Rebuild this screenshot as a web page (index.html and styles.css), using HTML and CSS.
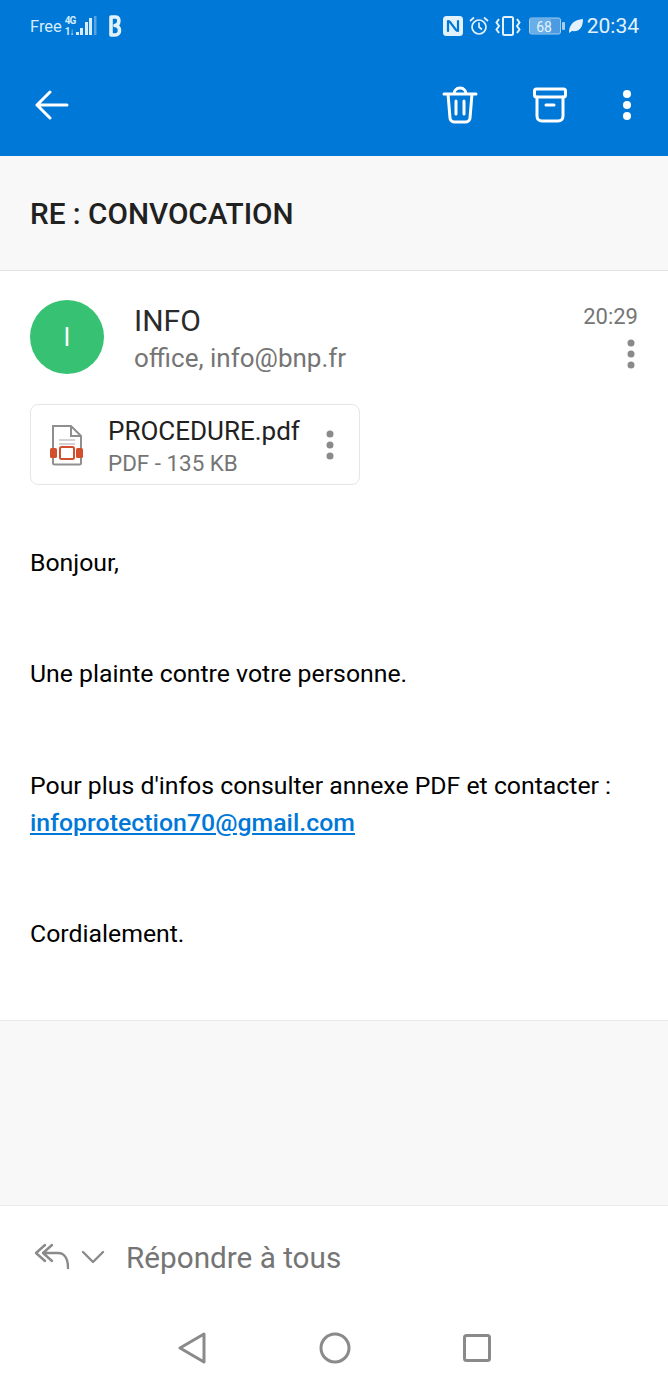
FILE: index.html
```html
<!DOCTYPE html>
<html lang="fr">
<head>
<meta charset="utf-8">
<title>RE : CONVOCATION</title>
<link rel="stylesheet" href="styles.css">
</head>
<body>
<div class="screen">
  <header class="appbar">
    <div class="status">
      <div class="status-left">
        <span class="carrier">Free</span>
        <span class="net"><span>4G</span><span>1↓</span></span>
        <svg class="signal" width="22" height="20" viewBox="0 0 22 20"><g fill="#d6ecfb"><rect x="0" y="16" width="3" height="3"/><rect x="4" y="12" width="3" height="7"/><rect x="9" y="6" width="3" height="13"/><rect x="13" y="2" width="3" height="17"/></g><rect x="18" y="0" width="2.500" height="19" fill="#5aa3e0"/></svg>
        <svg class="bt" width="14" height="22" viewBox="0 0 14 22" fill="none" stroke="#e3f1fb" stroke-width="3.600" stroke-linejoin="round"><path d="M3 2h5c4 0 4 8-1 8.500C13 11 13 20 7 20H3z"/></svg>
      </div>
      <div class="status-right">
        <svg class="ic-nfc" width="20" height="20" viewBox="0 0 20 20"><rect x="0" y="0" width="20" height="20" rx="3.500" fill="#e3f1fb"/><path d="M5 5v10M5 5c0 0 1 0 2 1l6 8c1 1 2 1 2 1M15 5v10" fill="none" stroke="#0078d7" stroke-width="2.200" stroke-linecap="round"/></svg>
        <svg class="ic-alarm" width="20" height="20" viewBox="0 0 20 20" fill="none" stroke="#e3f1fb" stroke-width="1.700"><circle cx="10" cy="11" r="7"/><path d="M10 6.500V11l3 2.500M1 5l4-3.500M19 5l-4-3.500"/></svg>
        <svg class="ic-vib" width="26" height="20" viewBox="0 0 26 20" fill="none" stroke="#e3f1fb" stroke-width="2"><rect x="8" y="1" width="10" height="18" rx="1.500"/><path d="M4 3L1.500 6.500 4 10l-2.500 3.500L4 17M22 3l2.500 3.500L22 10l2.500 3.500L22 17"/></svg>
        <svg class="battery" width="36" height="18" viewBox="0 0 36 18"><rect x="0.500" y="1" width="31" height="16" rx="2" fill="#4c9be0" stroke="#a4cdf0"/><rect x="1" y="1.500" width="21" height="15" rx="2" fill="#69aee6"/><rect x="33" y="5" width="3" height="8" rx="1" fill="#a4cdf0"/><text x="15" y="14.500" class="batt-text">68</text></svg>
        <svg class="leaf" width="16" height="16" viewBox="0 0 16 16"><path d="M1 15C1 6 6 2 15 1c0 9-4 13-11 12z" fill="#e3f1fb"/></svg>
        <span class="clock">20:34</span>
      </div>
    </div>
    <div class="actions">
      <svg width="34" height="30" viewBox="0 0 34 30" fill="none" stroke="#fff" stroke-width="3" stroke-linecap="round" stroke-linejoin="round"><path d="M2 15H32M15 2L2 15l13 13"/></svg>
      <div class="actions-right">
        <svg width="36" height="38" viewBox="0 0 36 38" fill="none" stroke="#fff" stroke-width="3" stroke-linecap="round" stroke-linejoin="round"><path d="M2 8h32M12 8c0-3 2-6 6-6s6 3 6 6M6 8l2 24c0 2 2 4 4 4h12c2 0 4-2 4-4l2-24M14 15v13M22 15v13"/></svg>
        <svg width="34" height="36" viewBox="0 0 34 36" fill="none" stroke="#fff" stroke-width="3" stroke-linecap="round" stroke-linejoin="round"><rect x="1.500" y="2" width="31" height="8" rx="2"/><path d="M4 10v19c0 3 2 5 5 5h16c3 0 5-2 5-5V10M13 18h8"/></svg>
        <svg width="10" height="32" viewBox="0 0 10 32" fill="#fff"><circle cx="5" cy="5" r="4"/><circle cx="5" cy="16" r="4"/><circle cx="5" cy="27" r="4"/></svg>
      </div>
    </div>
  </header>

  <section class="subject">RE : CONVOCATION</section>

  <main class="message">
    <div class="msg-head">
      <div class="avatar">I</div>
      <div class="who">
        <div class="sender">INFO</div>
        <div class="recipients">office, info@bnp.fr</div>
      </div>
      <div class="meta">
        <span class="time">20:29</span>
        <svg width="8" height="30" viewBox="0 0 8 30" fill="#8a8a8a"><circle cx="4" cy="4" r="3.500"/><circle cx="4" cy="15" r="3.500"/><circle cx="4" cy="26" r="3.500"/></svg>
      </div>
    </div>

    <div class="attachment">
      <svg class="file" width="36" height="44" viewBox="0 0 36 44"><path d="M4 3h18l10 10v27a1.500 1.500 0 0 1-1.500 1.500H5.500A1.500 1.500 0 0 1 4 40z" fill="#fff" stroke="#8f8f8f" stroke-width="2"/><path d="M22 3v10h10" fill="none" stroke="#8f8f8f" stroke-width="2"/><path d="M10 17h16M10 21h16" stroke="#c4c4c4" stroke-width="1.500"/><rect x="1" y="25" width="7" height="10" rx="1.500" fill="#d24f2e"/><rect x="27" y="25" width="7" height="10" rx="1.500" fill="#d24f2e"/><rect x="11" y="24" width="14" height="12" rx="1.500" fill="#fff" stroke="#d24f2e" stroke-width="2"/></svg>
      <div class="att-info">
        <div class="att-name">PROCEDURE.pdf</div>
        <div class="att-size">PDF - 135 KB</div>
      </div>
      <svg class="att-more" width="8" height="30" viewBox="0 0 8 30" fill="#8a8a8a"><circle cx="4" cy="4" r="3.500"/><circle cx="4" cy="15" r="3.500"/><circle cx="4" cy="26" r="3.500"/></svg>
    </div>

    <div class="body-text">
      <p>Bonjour,</p>
      <p>Une plainte contre votre personne.</p>
      <p>Pour plus d'infos consulter annexe PDF et contacter :<br><a href="#">infoprotection70@gmail.com</a></p>
      <p>Cordialement.</p>
    </div>
  </main>

  <div class="spacer"></div>

  <div class="reply">
    <svg width="36" height="28" viewBox="0 0 36 28" fill="none" stroke="#8a8a8a" stroke-width="2.400" stroke-linecap="round" stroke-linejoin="round"><path d="M11 2L2 10l9 8M18 2l-9 8 9 8M10 10h14c6 0 10 5 10 15"/></svg>
    <svg class="chev" width="24" height="14" viewBox="0 0 24 14" fill="none" stroke="#8a8a8a" stroke-width="2.400" stroke-linecap="round" stroke-linejoin="round"><path d="M2 2l10 10L22 2"/></svg>
    <span class="reply-label">Répondre à tous</span>
  </div>

  <nav class="sysnav">
    <svg width="28" height="32" viewBox="0 0 28 32" fill="none" stroke="#8a8a8a" stroke-width="3" stroke-linejoin="round"><path d="M26 2v28L2 16z"/></svg>
    <svg width="32" height="32" viewBox="0 0 32 32" fill="none" stroke="#8a8a8a" stroke-width="3"><circle cx="16" cy="16" r="14"/></svg>
    <svg class="nav-square" width="28" height="28" viewBox="0 0 28 28" fill="none" stroke="#8a8a8a" stroke-width="3"><rect x="1.500" y="1.500" width="25" height="25" rx="2"/></svg>
  </nav>
</div>
</body>
</html>
```
FILE: styles.css
```css
* { box-sizing: border-box; }
html, body { margin: 0; padding: 0; }
body { font-family: Roboto, "Liberation Sans", sans-serif; background: #fff; }
.screen { width: 668px; height: 1387px; display: flex; flex-direction: column; overflow: hidden; }

.appbar { height: 156px; background: #0078d7; color: #fff; display: flex; flex-direction: column; flex: none; }
.status { height: 52px; padding: 0 29px 0 30px; display: flex; justify-content: space-between; align-items: center; }
.status-left, .status-right { display: flex; align-items: center; }
.status-left { color: #d6ecfb; }
.carrier { font-size: 16.500px; margin-right: 3px; }
.net { display: flex; flex-direction: column; font-size: 10px; font-weight: 700; line-height: 11px; width: 11px; letter-spacing: -1px; white-space: nowrap; }
.bt { margin-left: 10px; }
.status-right svg { flex: none; }
.ic-alarm { margin-left: 6px; }
.ic-vib { margin-left: 6px; }
.battery { margin-left: 8px; }
.leaf { margin-left: 3px; }
.batt-text { font-family: Roboto, sans-serif; font-size: 14px; fill: #e3f1fb; text-anchor: middle; }
.clock { font-size: 21px; color: #e3f1fb; margin-left: 3px; }
.actions { flex: 1; display: flex; justify-content: space-between; align-items: center; padding: 0 36px 0 35px; margin-top: 2px; }
.actions-right { display: flex; align-items: center; gap: 54px; }
.actions-right svg:nth-child(2) { margin-left: 1px; margin-right: 1px; }

.subject { height: 115px; flex: none; background: #f8f8f8; border-bottom: 1px solid #e4e4e4; padding-left: 30px; display: flex; align-items: center; font-size: 29.700px; font-weight: 500; color: #212121; }

.message { padding: 29px 30px 0; flex: none; height: 750px; border-bottom: 1px solid #e8e8e8; }
.msg-head { display: flex; align-items: flex-start; height: 74px; }
.avatar { width: 74px; height: 74px; border-radius: 50%; background: #36c272; color: #fff; font-size: 25px; display: flex; align-items: center; justify-content: center; flex: none; }
.who { margin-left: 30px; flex: 1; }
.sender { font-size: 30px; line-height: 42px; color: #2b2b2b; }
.recipients { font-size: 26px; line-height: 33px; color: #757575; }
.meta { display: flex; flex-direction: column; align-items: flex-end; gap: 6px; padding-top: 1px; }
.time { font-size: 22px; line-height: 32px; color: #757575; }
.meta svg { margin-right: 3px; }

.attachment { margin-top: 30px; width: 330px; height: 81px; border: 1px solid #e6e6e6; border-radius: 8px; display: flex; align-items: center; padding-left: 18px; }
.file { flex: none; }
.att-info { margin-left: 23px; flex: 1; padding-top: 2px; }
.att-name { font-size: 26px; line-height: 34px; color: #212121; }
.att-size { font-size: 22.400px; line-height: 30px; color: #757575; }
.att-more { margin-right: 25px; flex: none; }

.body-text { margin-top: 59px; font-size: 24.800px; line-height: 37px; color: #000; }
.body-text p { margin: 0 0 74.300px; }
.body-text a { color: #0078d7; font-weight: 500; letter-spacing: 0.04px; text-decoration: underline; }

.spacer { flex: 1; background: #f8f8f8; }
.reply { height: 105px; flex: none; border-top: 1px solid #ececec; display: flex; align-items: center; padding: 0 0 2px 34px; background: #fff; }
.chev { margin-left: 11px; }
.reply-label { margin-left: 21px; font-size: 29.700px; color: #757575; }
.sysnav { height: 77px; flex: none; background: #fff; display: flex; justify-content: center; align-items: center; gap: 113px; padding-bottom: 2px; }
.nav-square { margin-left: -1px; }
```
